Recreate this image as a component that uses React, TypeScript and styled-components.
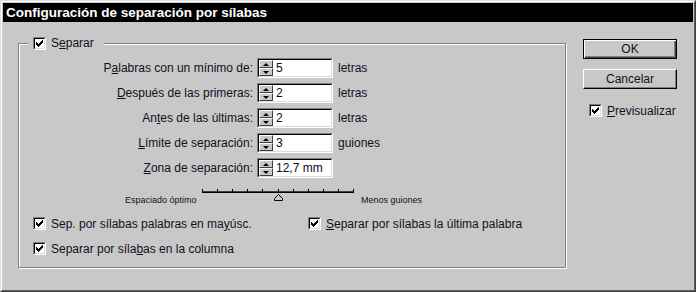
import React from 'react';
import styled, { createGlobalStyle } from 'styled-components';

const GlobalStyle = createGlobalStyle`
  html, body {
    margin: 0;
    padding: 0;
    background: #c8c8c8;
  }
  body {
    font-family: "Liberation Sans", Arial, sans-serif;
    font-size: 12px;
    color: #10101e;
  }
`;

const rows = [
  { pre: 'P', key: 'a', post: 'labras con un mínimo de:', value: '5', unit: 'letras' },
  { pre: '', key: 'D', post: 'espués de las primeras:', value: '2', unit: 'letras' },
  { pre: 'An', key: 't', post: 'es de las últimas:', value: '2', unit: 'letras' },
  { pre: '', key: 'L', post: 'ímite de separación:', value: '3', unit: 'guiones' },
  { pre: '', key: 'Z', post: 'ona de separación:', value: '12,7 mm', unit: '' },
];

const App = () => {
  return (
    <Window>
      <GlobalStyle />
      <Frame>
        <TitleBar>Configuración de separación por sílabas</TitleBar>
        <Body>
          <Group>
            <Legend>
              <CheckBox />
              <span>
                S<Key>e</Key>parar
              </span>
            </Legend>
            <Fields>
              {rows.map((r) => (
                <React.Fragment key={r.post}>
                  <Label>
                    {r.pre}
                    <Key>{r.key}</Key>
                    {r.post}
                  </Label>
                  <SpinBox value={r.value} />
                  <Unit>{r.unit}</Unit>
                </React.Fragment>
              ))}
            </Fields>
            <SliderRow>
              <SmallLabel $width={77}>Espaciado óptimo</SmallLabel>
              <Ruler />
              <SmallLabel $width={70} $gap={5}>Menos guiones</SmallLabel>
            </SliderRow>
            <Options>
              <Option>
                <CheckBox />
                <span>
                  Sep. por sílabas palabras en ma<Key>y</Key>úsc.
                </span>
              </Option>
              <Option>
                <CheckBox />
                <span>
                  <Key>S</Key>eparar por sílabas la última palabra
                </span>
              </Option>
              <Option>
                <CheckBox />
                <span>
                  Separar por síla<Key>b</Key>as en la columna
                </span>
              </Option>
            </Options>
          </Group>
          <Side>
            <Button $default>OK</Button>
            <Button>Cancelar</Button>
            <Option $indent={6} $top={5}>
              <CheckBox />
              <span>
                <Key>P</Key>revisualizar
              </span>
            </Option>
          </Side>
        </Body>
      </Frame>
    </Window>
  );
};

const CheckBox = () => (
  <BoxOuter>
    <BoxInner>
      <svg width="7" height="7" viewBox="0 0 7 7" shapeRendering="crispEdges">
        <rect x="0" y="2" width="1" height="3" fill="#000" />
        <rect x="1" y="3" width="1" height="3" fill="#000" />
        <rect x="2" y="4" width="1" height="3" fill="#000" />
        <rect x="3" y="3" width="1" height="3" fill="#000" />
        <rect x="4" y="2" width="1" height="3" fill="#000" />
        <rect x="5" y="1" width="1" height="3" fill="#000" />
        <rect x="6" y="0" width="1" height="3" fill="#000" />
      </svg>
    </BoxInner>
  </BoxOuter>
);

const SpinBox = ({ value }: { value: string }) => (
  <SpinOuter>
    <SpinInner>
      <SpinButtons>
        <SpinButton $up />
        <SpinButton />
      </SpinButtons>
      <SpinValue>{value}</SpinValue>
    </SpinInner>
  </SpinOuter>
);

const Ruler = () => (
  <svg width="154" height="17" viewBox="0 0 154 17" shapeRendering="crispEdges">
    <rect x="0" y="5" width="152" height="1" fill="#404040" />
    <rect x="0" y="6" width="152" height="1" fill="#000" />
    {Array.from({ length: 11 }).map((_, i) => (
      <rect key={i} x={i * 15.1} y="3" width="1" height="3" fill="#000" />
    ))}
    <polygon
      points="76.5,8.5 80.5,12.5 80.5,14.5 72.5,14.5 72.5,12.5"
      fill="#c8c8c8"
      stroke="#000"
      strokeWidth="1"
      shapeRendering="auto"
    />
  </svg>
);

const Window = styled.div`
  width: 696px;
  height: 292px;
  box-sizing: border-box;
  background: #c8c8c8;
  border: 1px solid;
  border-color: #dcdcdc #404040 #404040 #dcdcdc;
  display: flex;
`;

const Frame = styled.div`
  flex: 1;
  border: 1px solid;
  border-color: #fff #606060 #606060 #fff;
  padding: 1px;
  display: flex;
  flex-direction: column;
`;

const TitleBar = styled.div`
  height: 19px;
  line-height: 19px;
  background: #000;
  color: #fff;
  font-weight: bold;
  font-size: 13.5px;
  padding-left: 3px;
  white-space: nowrap;
`;

const Body = styled.div`
  display: flex;
  align-items: flex-start;
  padding: 15px 0 0 15px;
`;

const Group = styled.fieldset`
  margin: 0;
  padding: 0;
  width: 548px;
  height: 231px;
  box-sizing: border-box;
  border: 1px solid #808080;
  box-shadow: 1px 1px 0 #fff, inset 1px 1px 0 #fff;
  min-inline-size: 0;
`;

const Legend = styled.legend`
  display: flex;
  align-items: center;
  gap: 5px;
  height: 13px;
  margin-left: 9px;
  padding: 0 10px 0 5px;
  background: #c8c8c8;
  line-height: 13px;
`;

const Key = styled.u`
  text-decoration: underline;
  text-underline-offset: 1px;
`;

const Fields = styled.div`
  display: grid;
  grid-template-columns: 234px 76px auto;
  grid-auto-rows: 20px;
  column-gap: 4px;
  row-gap: 5px;
  padding-top: 8px;
`;

const Label = styled.div`
  justify-self: end;
  align-self: center;
  white-space: nowrap;
`;

const Unit = styled.div`
  align-self: center;
  padding-left: 1px;
`;

const SpinOuter = styled.div`
  display: flex;
  border: 1px solid;
  border-color: #808080 #fff #fff #808080;
`;

const SpinInner = styled.div`
  flex: 1;
  display: flex;
  border: 1px solid;
  border-color: #000 #dcdcdc #dcdcdc #000;
`;

const SpinButtons = styled.div`
  display: flex;
  flex-direction: column;
  width: 14px;
`;

const SpinButton = styled.div<{ $up?: boolean }>`
  height: 8px;
  box-sizing: border-box;
  background: #c8c8c8;
  border: 1px solid;
  border-color: #fff #404040 #404040 #fff;
  display: flex;
  align-items: center;
  justify-content: center;

  &::after {
    content: '';
    border-left: 3px solid transparent;
    border-right: 3px solid transparent;
    ${(p) => (p.$up ? 'border-bottom: 3px solid #000;' : 'border-top: 3px solid #000;')}
  }
`;

const SpinValue = styled.div`
  flex: 1;
  background: #fff;
  padding-left: 3px;
  line-height: 16px;
  color: #0a0a30;
`;

const SliderRow = styled.div`
  display: flex;
  align-items: flex-start;
  margin-top: 8px;
  padding-left: 106px;
`;

const SmallLabel = styled.div<{ $width: number; $gap?: number }>`
  width: ${(p) => p.$width}px;
  margin-left: ${(p) => p.$gap ?? 0}px;
  margin-top: 9px;
  font-size: 9px;
  line-height: 11px;
  white-space: nowrap;
`;

const Options = styled.div`
  display: grid;
  grid-template-columns: 275px auto;
  row-gap: 12px;
  margin-top: 11px;
  padding-left: 14px;
`;

const Option = styled.div<{ $indent?: number; $top?: number }>`
  display: flex;
  align-items: center;
  gap: 5px;
  height: 13px;
  white-space: nowrap;
  padding-left: ${(p) => p.$indent ?? 0}px;
  margin-top: ${(p) => p.$top ?? 0}px;
`;

const BoxOuter = styled.span`
  display: inline-flex;
  width: 13px;
  height: 13px;
  box-sizing: border-box;
  border: 1px solid;
  border-color: #808080 #fff #fff #808080;
  flex-shrink: 0;
`;

const BoxInner = styled.span`
  flex: 1;
  display: flex;
  align-items: center;
  justify-content: center;
  background: #fff;
  border: 1px solid;
  border-color: #000 #dcdcdc #dcdcdc #000;
`;

const Side = styled.div`
  display: flex;
  flex-direction: column;
  gap: 10px;
  margin: 2px 0 0 17px;
`;

const Button = styled.div<{ $default?: boolean }>`
  width: 94px;
  height: 20px;
  box-sizing: border-box;
  display: flex;
  align-items: center;
  justify-content: center;
  background: #c8c8c8;
  border: 1px solid;
  border-color: ${(p) => (p.$default ? '#000' : '#fff #000 #000 #fff')};
  box-shadow: ${(p) =>
    p.$default
      ? 'inset 1px 1px 0 #fff, inset -1px -1px 0 #404040, inset -2px -2px 0 #808080'
      : 'inset -1px -1px 0 #808080'};
`;

export default App;
